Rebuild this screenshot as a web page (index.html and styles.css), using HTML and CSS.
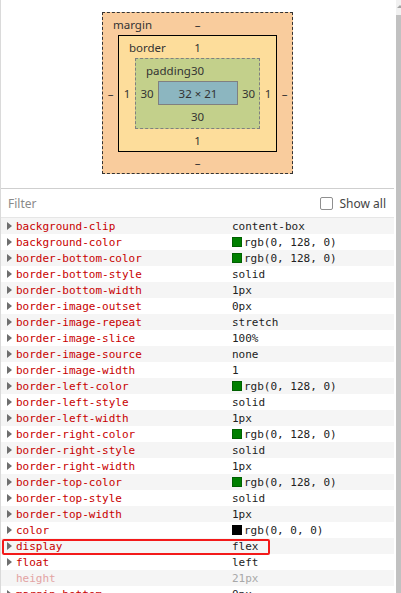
FILE: index.html
```html
<!DOCTYPE html>
<html>
<head>
<meta charset="utf-8">
<link rel="stylesheet" href="styles.css">
</head>
<body>
<div class="page">
  <div class="main">
    <section class="metrics">
      <div class="box margin-box">
        <div class="top"><span class="label">margin</span>–</div>
        <div class="side">–</div>
        <div class="box border-box">
          <div class="top"><span class="label">border</span>1</div>
          <div class="side">1</div>
          <div class="box padding-box">
            <div class="top"><span class="label">padding</span>30</div>
            <div class="side">30</div>
            <div class="content-box">32 × 21</div>
            <div class="side">30</div>
            <div class="bottom">30</div>
          </div>
          <div class="side">1</div>
          <div class="bottom">1</div>
        </div>
        <div class="side">–</div>
        <div class="bottom">–</div>
      </div>
    </section>
    <div class="filter-bar">
      <span class="filter-text">Filter</span>
      <span class="show-all"><span class="checkbox"></span>Show all</span>
    </div>
    <div class="props">
      <div class="row"><span class="tri"></span><span class="name">background-clip</span><span class="val">content-box</span></div>
      <div class="row"><span class="tri"></span><span class="name">background-color</span><span class="val"><span class="swatch green"></span>rgb(0, 128, 0)</span></div>
      <div class="row"><span class="tri"></span><span class="name">border-bottom-color</span><span class="val"><span class="swatch green"></span>rgb(0, 128, 0)</span></div>
      <div class="row"><span class="tri"></span><span class="name">border-bottom-style</span><span class="val">solid</span></div>
      <div class="row"><span class="tri"></span><span class="name">border-bottom-width</span><span class="val">1px</span></div>
      <div class="row"><span class="tri"></span><span class="name">border-image-outset</span><span class="val">0px</span></div>
      <div class="row"><span class="tri"></span><span class="name">border-image-repeat</span><span class="val">stretch</span></div>
      <div class="row"><span class="tri"></span><span class="name">border-image-slice</span><span class="val">100%</span></div>
      <div class="row"><span class="tri"></span><span class="name">border-image-source</span><span class="val">none</span></div>
      <div class="row"><span class="tri"></span><span class="name">border-image-width</span><span class="val">1</span></div>
      <div class="row"><span class="tri"></span><span class="name">border-left-color</span><span class="val"><span class="swatch green"></span>rgb(0, 128, 0)</span></div>
      <div class="row"><span class="tri"></span><span class="name">border-left-style</span><span class="val">solid</span></div>
      <div class="row"><span class="tri"></span><span class="name">border-left-width</span><span class="val">1px</span></div>
      <div class="row"><span class="tri"></span><span class="name">border-right-color</span><span class="val"><span class="swatch green"></span>rgb(0, 128, 0)</span></div>
      <div class="row"><span class="tri"></span><span class="name">border-right-style</span><span class="val">solid</span></div>
      <div class="row"><span class="tri"></span><span class="name">border-right-width</span><span class="val">1px</span></div>
      <div class="row"><span class="tri"></span><span class="name">border-top-color</span><span class="val"><span class="swatch green"></span>rgb(0, 128, 0)</span></div>
      <div class="row"><span class="tri"></span><span class="name">border-top-style</span><span class="val">solid</span></div>
      <div class="row"><span class="tri"></span><span class="name">border-top-width</span><span class="val">1px</span></div>
      <div class="row"><span class="tri"></span><span class="name">color</span><span class="val"><span class="swatch black"></span>rgb(0, 0, 0)</span></div>
      <div class="row highlighted"><span class="tri"></span><span class="name">display</span><span class="val">flex</span><span class="hl-box"></span></div>
      <div class="row"><span class="tri"></span><span class="name">float</span><span class="val">left</span></div>
      <div class="row inherited"><span class="tri hidden"></span><span class="name">height</span><span class="val">21px</span></div>
      <div class="row"><span class="tri"></span><span class="name">margin-bottom</span><span class="val">0px</span></div>
    </div>
  </div>
  <div class="scrollbar">
    <div class="sb-top"><span class="sb-arrow"></span></div>
    <div class="sb-thumb"></div>
  </div>
</div>
</body>
</html>
```

FILE: styles.css
```css
html, body {
  margin: 0;
  padding: 0;
  background: #fff;
  height: 593px;
  overflow: hidden;
}
.page {
  display: flex;
  height: 593px;
  width: 401px;
}
.main {
  width: 393px;
  border-left: 1px solid #dadada;
  display: flex;
  flex-direction: column;
  overflow: hidden;
}
.main > * {
  flex-shrink: 0;
}
.scrollbar {
  width: 7px;
  padding-left: 2px;
  box-sizing: border-box;
  display: flex;
  flex-direction: column;
}
.sb-top {
  height: 15px;
  background: #f1f1f1;
  position: relative;
}
.sb-arrow {
  position: absolute;
  left: 1px;
  top: 5px;
  width: 0;
  height: 0;
  border-left: 3px solid transparent;
  border-right: 3px solid transparent;
  border-bottom: 3px solid #a3a3a3;
}
.sb-thumb {
  flex: 1;
  background: #c1c1c1;
}

/* metrics */
.metrics {
  height: 188px;
  display: flex;
  justify-content: center;
  align-items: flex-start;
  padding-top: 12px;
  box-sizing: border-box;
  font-family: "Segoe UI", "Noto Sans", sans-serif;
  font-size: 11.5px;
  color: #333;
}
.box {
  display: grid;
  box-sizing: border-box;
}
.top, .bottom {
  grid-column: 1 / 4;
  display: flex;
  align-items: center;
  justify-content: center;
  position: relative;
}
.side {
  display: flex;
  align-items: center;
  justify-content: center;
}
.label {
  position: absolute;
  top: 50%;
  transform: translateY(-50%);
}
.margin-box {
  width: 191px;
  height: 162px;
  background: #f9cc9d;
  border: 1px dashed #333;
  grid-template-columns: 15px 1fr 15px;
  grid-template-rows: 22px 1fr 21px;
}
.margin-box > .top > .label { left: 10px; }
.border-box {
  background: #fddd9b;
  border: 1px solid #000;
  grid-template-columns: 16px 1fr 16px;
  grid-template-rows: 22px 1fr 22px;
}
.border-box > .top > .label { left: 10px; }
.padding-box {
  background: #c3d08b;
  border: 1px dashed #808080;
  grid-template-columns: 22px 1fr 21px;
  grid-template-rows: 22px 1fr 23px;
}
.padding-box > .top > .label { left: 10px; }
.content-box {
  background: #8cb6c0;
  border: 1px solid #808080;
  height: 24px;
  box-sizing: border-box;
  display: flex;
  align-items: center;
  justify-content: center;
}

/* filter */
.filter-bar {
  height: 28px;
  border-top: 1px solid #cfcfcf;
  border-bottom: 1px solid #e6e6e6;
  display: flex;
  align-items: center;
  justify-content: space-between;
  padding: 0 8px 0 7px;
  font-family: "Segoe UI", "Noto Sans", sans-serif;
  font-size: 12px;
}
.filter-text {
  color: #8a8a8a;
}
.show-all {
  display: flex;
  align-items: center;
  color: #444;
}
.checkbox {
  width: 11px;
  height: 11px;
  border: 1px solid #8f8f8f;
  border-radius: 2px;
  margin-right: 6px;
  background: #fff;
}

/* props */
.props {
  font-family: "DejaVu Sans Mono", "Liberation Mono", monospace;
  font-size: 11px;
}
.row {
  height: 16px;
  display: flex;
  align-items: center;
  position: relative;
  white-space: nowrap;
}
.row:nth-child(odd) {
  background: #f5f5f5;
}
.tri {
  width: 0;
  height: 0;
  border-top: 4px solid transparent;
  border-bottom: 4px solid transparent;
  border-left: 5px solid #6e6e6e;
  margin-left: 6px;
  margin-right: 4px;
}
.tri.hidden {
  border-left-color: transparent;
}
.name {
  color: #c80000;
  width: 216px;
}
.val {
  color: #222;
  display: flex;
  align-items: center;
}
.swatch {
  width: 10px;
  height: 10px;
  box-sizing: border-box;
  margin-right: 2px;
  border: 1px solid rgba(0, 0, 0, 0.25);
}
.swatch.green { background: #008000; }
.swatch.black { background: #000; }
.inherited .name { color: #e3a3a3; }
.inherited .val { color: #a8a8a8; }
.hl-box {
  position: absolute;
  left: 1px;
  top: 1px;
  width: 268px;
  height: 16px;
  border: 2px solid #f31a1a;
  border-radius: 2px;
  box-sizing: border-box;
}
```
